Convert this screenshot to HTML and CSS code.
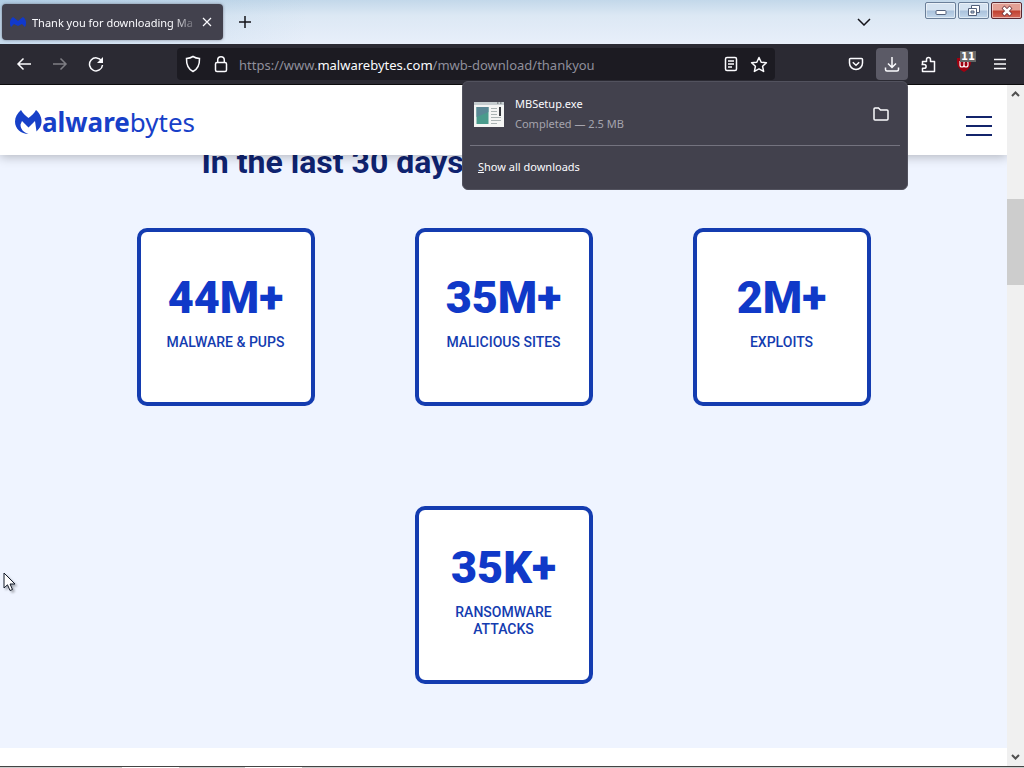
FILE: index.html
```html
<!DOCTYPE html>
<html lang="en">
<head>
<meta charset="utf-8">
<title>Thank you for downloading Malwarebytes</title>
<link rel="stylesheet" href="styles.css">
</head>
<body>
<header class="tabstrip">
  <div class="tab">
    <svg class="favicon" width="16" height="12" viewBox="0 0 16 12"><path d="M1 11C-1 7 0 3 3 1l5 4 5-4c3 2 4 6 2 10l-3-3-4 2-4-2z" fill="#1139cc"/></svg>
    <span class="tab-title">Thank you for downloading Ma</span>
    <button class="tab-close" aria-label="Close tab"><svg width="10" height="10" viewBox="0 0 10 10"><path d="M1 1l8 8M9 1L1 9" stroke="#fbfbfe" stroke-width="1.2"/></svg></button>
  </div>
  <button class="new-tab" aria-label="New tab"><svg width="12" height="12" viewBox="0 0 12 12"><path d="M6 0v12M0 6h12" stroke="#15141a" stroke-width="1.5"/></svg></button>
  <button class="all-tabs" aria-label="List all tabs"><svg width="14" height="8" viewBox="0 0 14 8"><path d="M1 1l6 6 6-6" fill="none" stroke="#15141a" stroke-width="1.5"/></svg></button>
  <div class="window-controls">
    <button class="win" aria-label="Minimize"><svg width="12" height="12" viewBox="0 0 12 12"><rect x="1" y="5.5" width="10" height="4" rx="1" fill="#fff" stroke="#53607a"/></svg></button>
    <button class="win" aria-label="Restore"><svg width="14" height="12" viewBox="0 0 14 12"><path d="M4.500.5h8v7h-8z" fill="#fff" stroke="#53607a"/><path d="M1.500 3.500h8v7h-8z" fill="#fff" stroke="#53607a"/><path d="M4 6h3v2H4z" fill="#b9cce2" stroke="#53607a"/></svg></button>
    <button class="win win-close" aria-label="Close"><svg width="14" height="12" viewBox="0 0 14 12"><path d="M3 2l8 8M11 2l-8 8" stroke="#6b3038" stroke-width="4"/><path d="M3.500 2.500l7 7M10.500 2.500l-7 7" stroke="#fff" stroke-width="2.500"/></svg></button>
  </div>
</header>

<nav class="toolbar">
  <div class="nav-buttons">
    <button class="tool" aria-label="Back"><svg width="16" height="16" viewBox="0 0 16 16"><path d="M15 8H2M7.500 2.500L2 8l5.500 5.500" class="line"/></svg></button>
    <button class="tool dim" aria-label="Forward"><svg width="16" height="16" viewBox="0 0 16 16"><path d="M1 8h13M8.500 2.500L14 8l-5.500 5.500" class="line"/></svg></button>
    <button class="tool" aria-label="Reload"><svg width="16" height="16" viewBox="0 0 16 16"><path d="M13.600 5A6.500 6.500 0 1 0 14.500 9" class="line"/><path d="M15 1v6H9z" fill="currentColor"/></svg></button>
  </div>
  <div class="urlbar">
    <svg width="16" height="18" viewBox="0 0 16 18"><path d="M8 1.500c2 1.300 4 1.800 6.500 2 .2 6-1.500 10.500-6.500 13C3 14 1.300 9.500 1.500 3.500 4 3.300 6 2.800 8 1.500z" class="line"/></svg>
    <svg width="14" height="18" viewBox="0 0 14 18"><rect x="1.500" y="7.500" width="11" height="9" rx="1.500" class="line"/><path d="M3.700 7.500V5a3.300 3.300 0 0 1 6.600 0v2.500" class="line"/></svg>
    <div class="url">https://www.<span class="domain">malwarebytes.com</span>/mwb-download/thankyou</div>
    <button class="url-action" aria-label="Reader view"><svg width="14" height="16" viewBox="0 0 14 16"><rect x="1.500" y="1.500" width="11" height="13" rx="1.500" class="line"/><path d="M4 5h6M4 8h6M4 11h4" class="line"/></svg></button>
    <button class="url-action" aria-label="Bookmark"><svg width="18" height="17" viewBox="0 0 18 17"><path d="M9 1.500l2.200 4.700 5.200.6-3.800 3.500 1 5.100L9 12.900l-4.600 2.500 1-5.100L1.600 6.800l5.200-.6z" class="line round"/></svg></button>
  </div>
  <div class="extras">
    <button class="tool" aria-label="Pocket"><svg width="16" height="14" viewBox="0 0 16 14"><path d="M2.500 1.500h11a1 1 0 0 1 1 1V6a6.500 6.500 0 0 1-13 0V2.500a1 1 0 0 1 1-1z" class="line"/><path d="M4.800 5.200L8 8.300l3.200-3.100" class="line"/></svg></button>
    <button class="tool active" aria-label="Downloads"><svg width="16" height="16" viewBox="0 0 16 16"><path d="M8 1v10M4 7.500l4 4 4-4M1.500 11.500v2a1.500 1.500 0 0 0 1.500 1.500h10a1.500 1.500 0 0 0 1.500-1.500v-2" class="line"/></svg></button>
    <button class="tool" aria-label="Extensions"><svg width="16" height="17" viewBox="0 0 16 17"><path d="M2.500 8V5.500h4V3.500a2 2 0 0 1 4 0v2h4v10h-12V12.300h1.700a1.900 1.900 0 0 0 0-3.800H1.500" class="line round"/></svg></button>
    <button class="tool blocker" aria-label="uBlock Origin"><svg width="16" height="16" viewBox="0 0 16 16"><path d="M8 0c2 1.500 4 2 7 2 .5 7-1 11-7 14C2 13 .5 9 1 2c3 0 5-.5 7-2z" fill="#a00010"/><path d="M4 5v4a2 2 0 0 0 4 0V6m0 3a2 2 0 0 0 4 0V7a2 2 0 0 0-4 0" fill="none" stroke="#fff" stroke-width="1.200"/></svg><span class="count">11</span></button>
    <button class="tool" aria-label="Application menu"><svg width="14" height="12" viewBox="0 0 14 12"><path d="M1 1.500h12M1 6h12M1 10.500h12" class="line"/></svg></button>
  </div>
  <section class="downloads" aria-label="Downloads">
    <div class="download">
      <svg width="30" height="26" viewBox="0 0 30 26"><rect y="1" width="30" height="25" fill="#f4f5f4"/><path d="M0 1h30v3H0z" fill="#c5cccf"/><path d="M23 2h1.500M26 2h1.500" stroke="#4e5357"/><rect x="2.500" y="6" width="12" height="17" fill="#4a9b8c"/><path d="M2.500 6h12v5l-12 5z" fill="#5a8795"/><path d="M17 7.500h6M17 10.500h6M17 13.500h6M17 16.500h10M17 19.500h10M17 22.500h6" stroke="#aab3b3"/><path d="M25 6h2v9h-2z" fill="#373a40"/></svg>
      <div class="file"><div class="file-name">MBSetup.exe</div><div class="file-status">Completed — 2.5 MB</div></div>
      <button class="folder" aria-label="Open folder"><svg width="16" height="14" viewBox="0 0 16 14"><path d="M2 1h3.500l2 2H14a1 1 0 0 1 1 1v8a1 1 0 0 1-1 1H2a1 1 0 0 1-1-1V2a1 1 0 0 1 1-1z" class="line"/></svg></button>
    </div>
    <button class="show-all"><u>S</u>how all downloads</button>
  </section>
</nav>

<div class="viewport">
  <main class="page">
    <header class="site-header">
      <a class="logo" href="#" aria-label="Malwarebytes"><svg width="27" height="25" viewBox="0 0 27 25"><path d="M6 0c2 3.500 4.500 5.800 7.500 8C16.500 5.800 19 3.500 21 0c4 3.500 6 8 5.500 12.500C26.200 16 24.500 18.500 21.500 21.500L20 11l-6.500 6.500L7 11l-1.500 3.500c0 4.500 3 8 8 9.500C6 24 0 19 0 11.500 0 7 2.500 3 6 0z" fill="#1740c8"/></svg><span class="wordmark"><b>alware</b>bytes</span></a>
      <button class="site-menu" aria-label="Menu"><svg width="26" height="20" viewBox="0 0 26 20"><path d="M0 1h26M0 10h26M0 19h26" stroke="#13246b" stroke-width="2"/></svg></button>
    </header>
    <section class="stats">
      <h2 class="stats-title">In the last 30 days</h2>
      <div class="cards">
        <div class="card"><div class="number">44M+</div><div class="label">MALWARE &amp; PUPS</div></div>
        <div class="card"><div class="number">35M+</div><div class="label">MALICIOUS SITES</div></div>
        <div class="card"><div class="number">2M+</div><div class="label">EXPLOITS</div></div>
        <div class="card"><div class="number">35K+</div><div class="label">RANSOMWARE ATTACKS</div></div>
      </div>
    </section>
  </main>
  <div class="scrollbar">
    <svg class="arrow" width="9" height="6" viewBox="0 0 9 6"><path d="M1 5l3.500-3.500L8 5" fill="none" stroke="#505050" stroke-width="2"/></svg>
    <div class="track"><div class="thumb"></div></div>
    <svg class="arrow" width="9" height="6" viewBox="0 0 9 6"><path d="M1 1l3.500 3.500L8 1" fill="none" stroke="#505050" stroke-width="2"/></svg>
  </div>
</div>
<footer class="taskbar"><span class="task"></span><span class="task"></span></footer>

<svg class="cursor" width="13" height="20" viewBox="0 0 13 20"><path d="M1 1v15l3.500-3.200L7 18.500l2.500-1L7 12h5z" fill="#fff" stroke="#111827"/></svg>
</body>
</html>
```

FILE: styles.css
```css
* { box-sizing: border-box; }

body {
  margin: 0;
  height: 100vh;
  display: flex;
  flex-direction: column;
  overflow: hidden;
  font: 11px/16px "Noto Sans", "Open Sans", sans-serif;
  background: #fff;
}

button {
  display: flex;
  align-items: center;
  justify-content: center;
  padding: 0;
  border: 0;
  background: none;
  color: inherit;
  font: inherit;
}

svg { flex: none; display: block; }
.line { fill: none; stroke: currentColor; stroke-width: 1.5; }
.round { stroke-linejoin: round; }

/* Tab strip */
.tabstrip {
  flex: none;
  height: 44px;
  display: flex;
  align-items: flex-start;
  padding-left: 2px;
  background:
    linear-gradient(90deg, rgba(150, 190, 220, 0.4), rgba(220, 232, 245, 0) 30%),
    linear-gradient(#c3d8ea, #dce8f4 35%, #e8effa);
}
.tab {
  width: 221px;
  height: 36px;
  margin-top: 4px;
  padding: 0 10px 0 8px;
  display: flex;
  align-items: center;
  border-radius: 4px;
  background: #42414d;
  color: #fbfbfe;
  box-shadow: 0 0 3px rgba(40, 40, 60, 0.5);
}
.tab-title {
  flex: 1;
  margin-left: 6px;
  padding-top: 2px;
  white-space: nowrap;
  mask-image: linear-gradient(90deg, #000 84%, transparent);
}
.tab-close { width: 12px; height: 16px; margin-left: 2px; }
.new-tab { width: 32px; height: 36px; margin: 4px 0 0 6px; color: #15141a; }
.all-tabs { width: 32px; height: 36px; margin: 4px 45px 0 auto; }
.window-controls { display: flex; gap: 2px; padding: 2px 2px 0 0; }
.win {
  width: 31px;
  height: 17px;
  border: 1px solid #6a7f99;
  border-radius: 2px;
  background: linear-gradient(#d5e3f1 48%, #a9c1db 52%, #c3d8ec);
  box-shadow: inset 0 0 0 1px rgba(255, 255, 255, 0.5);
}
.win-close { border-color: #5b2730; background: linear-gradient(#e3a095 48%, #c03f2e 52%, #d4685a); }

/* Toolbar */
.toolbar {
  position: relative;
  z-index: 3;
  flex: none;
  height: 41px;
  display: flex;
  align-items: center;
  padding: 0 8px;
  border-bottom: 1px solid #0c0c0d;
  background: #2b2a33;
  color: #fbfbfe;
}
.nav-buttons, .extras { display: flex; gap: 4px; }
.tool { position: relative; width: 32px; height: 32px; border-radius: 4px; }
.dim { opacity: 0.4; }
.active { background: #5b5a66; }
.count {
  position: absolute;
  top: 3px;
  right: 4px;
  padding: 0 1px;
  background: #666;
  color: #fff;
  font: bold 10px/11px "DejaVu Sans", sans-serif;
}
.urlbar {
  flex: 1;
  height: 32px;
  display: flex;
  align-items: center;
  margin: 0 65px;
  padding: 0 7px 0 8px;
  border-radius: 4px;
  background: #1c1b22;
}
.urlbar svg + svg { margin-left: 13px; }
.url { flex: 1; margin-left: 11px; padding-top: 2px; font-size: 13px; color: #8f8f9b; white-space: nowrap; }
.domain { color: #fbfbfe; }
.url-action { width: 18px; margin-left: 10px; }

/* Downloads panel, anchored under its toolbar button */
.downloads {
  position: absolute;
  top: 37px;
  right: 116px;
  width: 446px;
  padding: 0 7px 8px;
  border: 1px solid #52525e;
  border-radius: 6px;
  background: #42414d;
}
.download {
  display: flex;
  align-items: center;
  height: 64px;
  padding: 0 11px 0 4px;
  border-bottom: 1px solid #74737f;
}
.file { flex: 1; margin-left: 11px; line-height: 20px; }
.file-status { color: #a5a4ad; }
.show-all { height: 35px; padding: 6px 8px 0; }

/* Web page */
.viewport { flex: 1; min-height: 0; display: flex; }
.page { flex: 1; overflow: hidden; }
.site-header {
  position: relative;
  z-index: 1;
  height: 70px;
  display: flex;
  align-items: center;
  justify-content: space-between;
  padding: 4px 15px 0;
  background: #fff;
  box-shadow: 0 2px 10px rgba(0, 0, 0, 0.25);
}
.logo { display: flex; align-items: center; color: #1740c8; text-decoration: none; }
.wordmark { font-size: 26px; line-height: 32px; }
.site-menu { margin-top: 8px; }
.stats { padding-bottom: 64px; background: #eff4ff; }
.stats-title {
  max-width: 604px;
  margin: 0 auto;
  height: 73px;
  font: bold 32px/14px Roboto, sans-serif;
  color: #0f2370;
}
.cards {
  max-width: 734px;
  margin: 0 auto;
  display: flex;
  flex-wrap: wrap;
  justify-content: center;
  gap: 100px;
}
.card {
  width: 178px;
  height: 178px;
  display: flex;
  flex-direction: column;
  justify-content: center;
  padding: 0 26px 10px;
  border: 4px solid #143cb0;
  border-radius: 10px;
  background: #fff;
  text-align: center;
  font-family: Roboto, sans-serif;
  color: #143cb0;
}
.number { font-size: 45px; line-height: 50px; font-weight: 900; color: #1039c8; }
.label { margin-top: 11px; font-size: 14px; line-height: 17px; font-weight: 500; }

.scrollbar {
  width: 17px;
  display: flex;
  flex-direction: column;
  align-items: center;
  padding: 6px 0;
  background: #f0f0f0;
}
.track { flex: 1; align-self: stretch; padding-top: 102px; }
.thumb { height: 86px; background: #cdcdcd; }

.taskbar {
  flex: none;
  height: 2px;
  display: flex;
  gap: 66px;
  padding-left: 122px;
  border-top: 1px solid #444;
  background: #ccc;
}
.task { width: 57px; background: #fff; }

.cursor {
  position: absolute;
  left: 3px;
  top: 572px;
  z-index: 4;
  filter: drop-shadow(2px 2px 1px rgba(0, 0, 0, 0.3));
}
```
